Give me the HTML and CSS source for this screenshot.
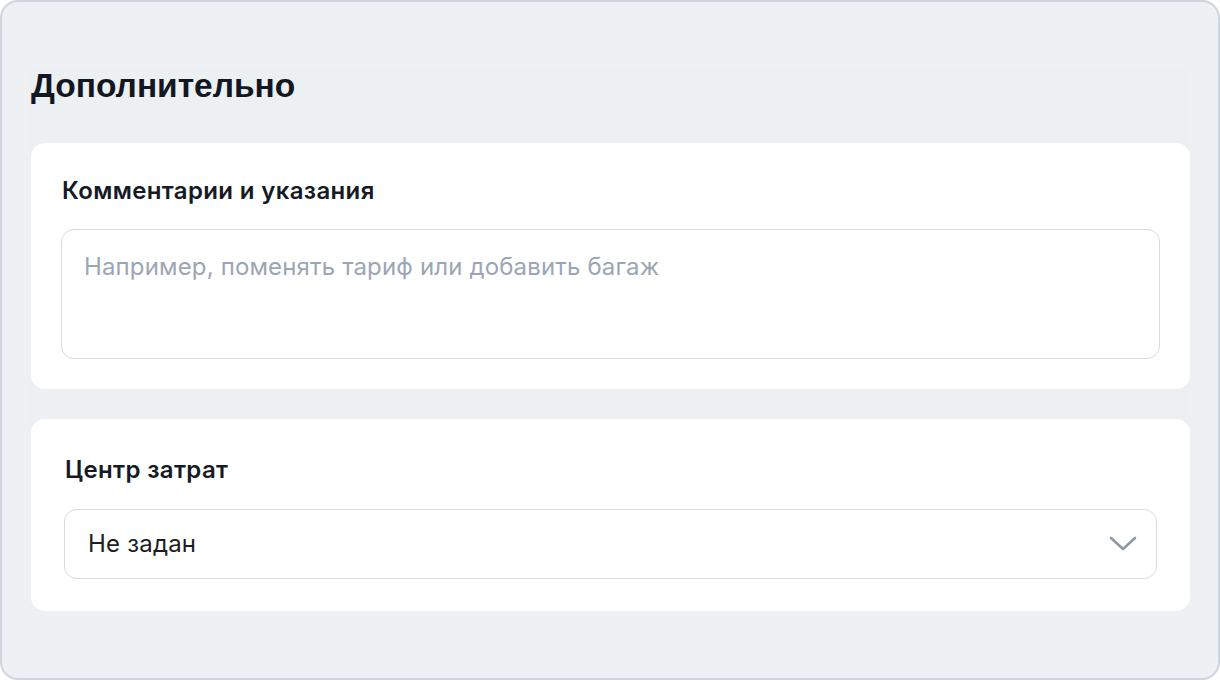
FILE: index.html
```html
<!DOCTYPE html>
<html lang="ru">
<head>
  <meta charset="UTF-8" />
  <meta name="viewport" content="width=device-width, initial-scale=1.0" />
  <title>Дополнительно</title>
  <link rel="stylesheet" href="styles.css">
</head>
<body>
  <div class="panel">
    <div class="section">
      <h2 class="panel-title">Дополнительно</h2>

      <div class="card card-comment">
        <label class="field-label" for="comment">Комментарии и указания</label>
        <textarea id="comment" class="comment-input" placeholder="Например, поменять тариф или добавить багаж"></textarea>
      </div>

      <div class="card card-cost">
        <div class="field-label">Центр затрат</div>
        <div class="select-box">
          <span class="select-value">Не задан</span>
          <svg class="select-arrow" width="28" height="18" viewBox="0 0 28 18" fill="none">
            <path d="M2 3 L14 14 L26 3" stroke="#8d99a8" stroke-width="2.6" stroke-linecap="round" stroke-linejoin="round"/>
          </svg>
        </div>
      </div>
    </div>
  </div>
</body>
</html>
```

FILE: styles.css
```css
* {
  box-sizing: border-box;
}

body {
  margin: 0;
  padding: 0;
  font-family: 'Inter', 'Noto Sans', sans-serif;
  background-color: #ffffff;
}

.panel {
  width: 1220px;
  height: 680px;
  border: 2px solid #cfd5de;
  border-radius: 18px;
  background-color: #eff0f4;
  padding: 66px 28px 0 28px;
}

.section {
  background-color: #ecf0f3;
}

.panel-title {
  font-family: 'Liberation Sans', Arial, sans-serif;
  font-size: 33.5px;
  line-height: 36px;
  font-weight: 700;
  color: #121721;
  margin: 0 0 39px;
  padding-left: 1px;
}

.card {
  background-color: #ffffff;
  border-radius: 14px;
  margin-left: 1px;
}

.card-comment {
  padding: 34px 30px 30px 30px;
  margin-bottom: 30px;
}

.card-cost {
  padding: 37px 33px 32px 33px;
}

.field-label {
  display: block;
  font-size: 24px;
  line-height: 28px;
  font-weight: 600;
  letter-spacing: 0.35px;
  color: #151a24;
  margin-bottom: 24px;
  padding-left: 1px;
}

.card-cost .field-label {
  margin-bottom: 25px;
}

.comment-input {
  display: block;
  width: 100%;
  height: 130px;
  border: 1.5px solid #d9dbdf;
  border-radius: 13px;
  padding: 23px 22px;
  font-family: 'Inter', 'Noto Sans', sans-serif;
  font-size: 24px;
  line-height: 28px;
  letter-spacing: 0.15px;
  color: #1c1f26;
  resize: none;
  outline: none;
}

.comment-input::placeholder {
  color: #9ba6b4;
}

.select-box {
  display: flex;
  align-items: center;
  justify-content: space-between;
  height: 70px;
  border: 1.5px solid #d9dbdf;
  border-radius: 13px;
  padding: 0 19px 0 23px;
  cursor: pointer;
}

.select-value {
  font-size: 24px;
  line-height: 28px;
  letter-spacing: 0.2px;
  color: #1c1d21;
}

.select-arrow {
  display: block;
}
```
